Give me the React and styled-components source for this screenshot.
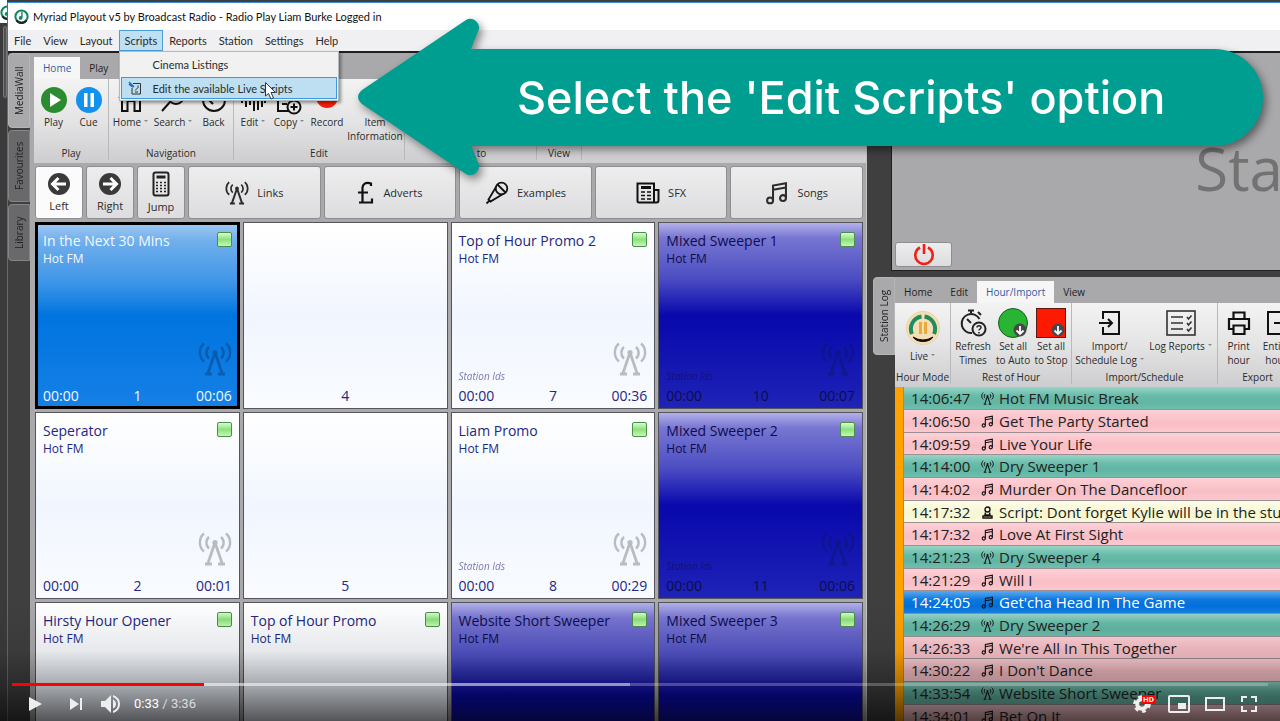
import { useState } from "react";
import styled, { createGlobalStyle, css } from "styled-components";

const GlobalStyle = createGlobalStyle`
    * {
        box-sizing: border-box;
    }
    html, body, #root {
        height: 100%;
        margin: 0;
    }
    body {
        overflow: hidden;
        font-family: "Open Sans", "Noto Sans", sans-serif;
        font-size: 11px;
        color: #2b2b2b;
        background-color: #3f3f40;
    }
    button {
        font: inherit;
        color: inherit;
        padding: 0;
        border: none;
        background: none;
        cursor: pointer;
    }
`;

const Player = styled.div`
    position: relative;
    display: flex;
    height: 100%;
    overflow: hidden;
    background-color: #3f3f40;
`;

const BackWindow = styled.div`
    flex: 0 0 7px;
    padding-top: 5px;
    overflow: hidden;
    background: linear-gradient(#fff 23px, #3b3b3c 23px);
`;

const BackTab = styled.div`
    height: 72px;
    margin: 3px 0 0 3px;
    border: 1px solid #777;
    border-radius: 3px;
    background-color: #525254;
`;

const Window = styled.div`
    flex: 1;
    min-width: 0;
    display: flex;
    flex-direction: column;
    margin-top: 2px;
    border-top: 1px solid #3f8fd8;
    border-left: 1px solid #3775ab;
`;

const TitleBar = styled.div`
    display: flex;
    align-items: center;
    gap: 4px;
    height: 27px;
    padding-left: 6px;
    font-family: Lato, sans-serif;
    color: #111;
    background-color: #fff;
`;

const MenuBar = styled.nav`
    position: relative;
    display: flex;
    height: 21px;
    font-family: Lato, sans-serif;
    background-color: #f0eff1;
`;

const MenuButton = styled.button`
    padding: 0 5px;
    border: 1px solid ${({ $open }) => ($open ? "#4a9edb" : "transparent")};
    background-color: ${({ $open }) => ($open ? "#bfdff2" : "transparent")};
`;

const MenuWrapper = styled.div`
    position: relative;
    display: flex;
`;

const Dropdown = styled.div`
    position: absolute;
    z-index: 3;
    top: 21px;
    left: 0;
    width: 220px;
    padding: 2px;
    border: 1px solid #b8b8b8;
    background-color: #f1f1f2;
    box-shadow: 2px 2px 3px rgba(0, 0, 0, 0.4);
`;

const DropdownItem = styled.button`
    display: grid;
    grid-template-columns: 26px 1fr;
    align-items: center;
    width: 100%;
    height: 20px;
    margin-bottom: ${({ $active }) => ($active ? "0" : "4px")};
    text-align: left;
    outline: ${({ $active }) => ($active ? "1px solid #3b9ade" : "none")};
    background-color: ${({ $active }) => ($active ? "#bedff1" : "transparent")};

    svg {
        justify-self: center;
    }
    span {
        grid-column: 2;
        padding-left: 5px;
        white-space: nowrap;
    }
`;

const Workspace = styled.main`
    flex: 1;
    min-height: 0;
    display: grid;
    grid-template-columns: minmax(0, 19fr) minmax(0, 9fr);
    column-gap: 6px;
    border-top: 2px solid #1f1f20;
    background-color: #3f3f40;
`;

const Pane = styled.section`
    flex: 1;
    min-width: 0;
    min-height: 0;
    display: flex;
`;

const SideTabs = styled.div`
    flex: 0 0 22px;
    display: flex;
    flex-direction: column;
    gap: 2px;
`;

const SideTab = styled.button`
    display: flex;
    align-items: center;
    justify-content: center;
    height: ${({ $h }) => $h}px;
    writing-mode: vertical-rl;
    rotate: 180deg;
    border: 1px solid ${({ $active }) => ($active ? "#b5b5b7" : "#858587")};
    border-radius: 0 4px 4px 0;
    background-color: ${({ $active }) => ($active ? "#a9a8aa" : "#69696b")};
    font-size: 10px;
    color: #222;
`;

const Panel = styled.div`
    flex: 1;
    min-width: 0;
    display: flex;
    flex-direction: column;
    padding-top: 4px;
    background-color: #a9a8aa;
    overflow: hidden;
`;

const WallPanel = styled(Panel)`
    padding-left: 4px;
    border-right: 1px solid #c4c4c6;
`;

const TabRow = styled.div`
    flex: none;
    display: flex;
    height: 22px;
    font-size: 10px;
`;

const Tab = styled.button`
    padding: 0 9px;
    color: ${({ $active }) => ($active ? "#2f5da3" : "#222")};
    background-color: ${({ $active }) => ($active ? "#f6f6f7" : "transparent")};
`;

const Ribbon = styled.div`
    flex: none;
    display: flex;
    height: 84px;
    overflow: hidden;
    font-size: 10px;
    background: linear-gradient(#f3f3f4, #e4e4e5 50%, #cdcdcf);
`;

const Group = styled.div`
    flex: none;
    display: flex;
    flex-direction: column;
    justify-content: space-between;
    width: ${({ $w }) => $w}px;
    padding-top: 4px;
    margin-bottom: 3px;
    border-right: 1px solid #b9b9bb;
`;

const Tools = styled.div`
    display: flex;
    justify-content: center;
`;

const Tool = styled.button`
    display: flex;
    flex-direction: column;
    align-items: center;
    width: ${({ $w }) => $w}px;
    line-height: 14px;
    white-space: nowrap;

    > svg {
        height: ${({ $icon }) => $icon || 32}px;
    }
`;

const Caret = styled.i`
    display: inline-block;
    margin: 0 0 4px 3px;
    border: 2px solid transparent;
    border-top-color: #888;
    border-bottom: none;
`;

const GroupName = styled.div`
    padding-left: ${({ $pad }) => $pad || 0}px;
    line-height: 14px;
    text-align: center;
    white-space: nowrap;
`;

const PageBar = styled.div`
    flex: none;
    display: flex;
    gap: 3px;
    height: 59px;
    padding: 3px 3px 3px 1px;
`;

const pageButton = css`
    display: flex;
    align-items: center;
    justify-content: center;
    border: 1px solid #8e8e90;
    border-radius: 3px;
    background: linear-gradient(#ededee, #dddddf);
`;

const NavButton = styled.button`
    ${pageButton}
    flex: 0 0 48px;
    flex-direction: column;
    line-height: 14px;
    gap: 3px;
    ${({ $active }) => $active && "background: #fbfbfc;"}
`;

const PageButton = styled.button`
    ${pageButton}
    flex: 1;
    gap: 8px;
`;

const Wall = styled.div`
    display: grid;
    grid-template-columns: repeat(4, minmax(0, 1fr));
    grid-auto-rows: 187px;
    gap: 3px;
    padding: 0 3px 0 1px;
`;

const tileLooks = {
    light: css`
        color: #23277f;
        background: linear-gradient(#fff, #f1f6fe 50%, #f9fbff);
    `,
    playing: css`
        color: #f3f9ff;
        border: 3px solid #000;
        padding: 6px 5px 0;
        background: linear-gradient(#9bc6f2, #70afec 9%, #3d95e8 32%, #0074df 50%, #1580e6);
    `,
    deep: css`
        color: #0d0d4c;
        background: linear-gradient(#b3b1ea, #7876d2 8%, #4c4dc3 30%, #0808ac 50%, #1f23b6);
    `,
};

const Tile = styled.button`
    display: flex;
    flex-direction: column;
    padding: 8px 7px 2px;
    border: 1px solid #55555f;
    text-align: left;
    ${({ $look }) => tileLooks[$look]}
`;

const TileTop = styled.div`
    display: flex;
    justify-content: space-between;
`;

const TileTitle = styled.div`
    font-size: 14px;
    line-height: 20px;
    white-space: nowrap;
`;

const TileStation = styled.div`
    font-size: 12px;
    line-height: 16px;
`;

const Ready = styled.span`
    width: 15px;
    height: 15px;
    margin-top: 1px;
    border: 1px solid #4c8f4a;
    border-radius: 2px;
    background: linear-gradient(#d8fbd0, #8be27c 50%, #c6f7b9);
`;

const TileMiddle = styled.div`
    flex: 1;
    display: flex;
    align-items: flex-end;
    justify-content: space-between;
    padding-bottom: 4px;
`;

const Category = styled.em`
    font-size: 10px;
    line-height: 14px;
    opacity: 0.6;
`;

const TileBottom = styled.div`
    display: grid;
    grid-template-columns: 1fr 1fr 1fr;
    font-size: 14px;
    line-height: 18px;
    margin-bottom: 1px;

    span:nth-child(2) {
        text-align: center;
    }
    span:nth-child(3) {
        text-align: right;
    }
`;

const Watermark = styled(Mast)`
    margin-bottom: 7px;
    opacity: ${({ $look }) => ($look === "light" ? 0.28 : 0.3)};
    color: ${({ $look }) => ($look === "light" ? "#222" : "#061a40")};
`;

const RightColumn = styled.div`
    display: flex;
    flex-direction: column;
    gap: 6px;
    min-width: 0;
    min-height: 0;
`;

const StationPanel = styled.section`
    flex: 0 0 218px;
    display: flex;
    flex-direction: column;
    justify-content: space-between;
    margin-left: 18px;
    padding: 80px 0 3px 3px;
    border: 1px solid #202021;
    border-top: none;
    border-right: none;
    background-color: #a9a8aa;
    overflow: hidden;
`;

const StationName = styled.div`
    padding-left: 78%;
    font-size: 60px;
    line-height: 70px;
    color: #727273;
`;

const PowerButton = styled.button`
    ${pageButton}
    width: 57px;
    height: 25px;
`;

const LogTable = styled.table`
    display: block;
    border-left: 8px solid #ffa200;
    padding-left: 1px;
    background-color: #8d8d90;

    tbody {
        display: block;
    }
`;

const rowLooks = {
    link: "linear-gradient(#96d5c6, #68bba9 40%, #62b5a3 70%, #6cc0ad)",
    song: "linear-gradient(#ffd0d7, #f8bec5 60%, #fdc7ce)",
    script: "linear-gradient(#fdfde8, #f6f6d2 60%, #fafadc)",
    current: "linear-gradient(#5ba9f0, #0c78df 40%, #0070db 70%, #1a80e4)",
};

const LogRow = styled.tr`
    display: grid;
    grid-template-columns: 70px 18px 1fr;
    align-items: center;
    height: 23px;
    padding-left: 7px;
    border-bottom: 1px solid #9b8f93;
    font-size: 15px;
    line-height: 22px;
    color: ${({ $look }) => ($look === "current" ? "#fff" : "#222")};
    background: ${({ $look }) => rowLooks[$look]};

    &:nth-child(3n) {
        height: 22px;
    }
    td {
        padding: 0;
        white-space: nowrap;
    }
    svg {
        display: block;
        color: #111;
    }
`;

const Callout = styled.div`
    position: absolute;
    z-index: 4;
    top: 18px;
    left: 28%;
    right: 17px;
    display: flex;
    align-items: center;
    filter: drop-shadow(3px 4px 4px rgba(0, 0, 0, 0.45));

    svg {
        flex: none;
    }
`;

const CalloutText = styled.div`
    flex: 1;
    height: 97px;
    margin-left: -12px;
    padding-right: 49px;
    border-radius: 0 49px 49px 0;
    background-color: #009e91;
    font-family: Inter, sans-serif;
    font-weight: 500;
    font-size: 45px;
    line-height: 97px;
    text-align: center;
    white-space: nowrap;
    color: #fff;
`;

const Pointer = styled.svg`
    position: absolute;
    z-index: 5;
    top: 51px;
    left: 145px;
`;

const Controls = styled.div`
    position: absolute;
    z-index: 6;
    left: 0;
    right: 0;
    bottom: 0;
    padding: 83px 12px 0;
    background: linear-gradient(
        transparent,
        rgba(0, 0, 0, 0.07) 42%,
        rgba(0, 0, 0, 0.34) 73%,
        rgba(0, 0, 0, 0.66)
    );
    color: #eee;
`;

const Seek = styled.input`
    appearance: none;
    display: block;
    width: 100%;
    height: 3px;
    margin: 0;
    background: linear-gradient(
        to right,
        #f00 ${({ value }) => value}%,
        rgba(255, 255, 255, 0.55) ${({ value }) => value}% 49.2%,
        rgba(255, 255, 255, 0.24) 49.2%
    );

    &::-webkit-slider-thumb {
        appearance: none;
        width: 0;
        height: 0;
    }
`;

const ControlRow = styled.div`
    display: flex;
    align-items: center;
    justify-content: space-between;
    height: 35px;
    padding: 0 10px 0 16px;

    > div {
        display: flex;
        align-items: center;
    }
    button {
        position: relative;
        display: flex;
    }
`;

const LeftControls = styled.div`
    gap: 18px;
`;

const RightControls = styled.div`
    gap: 15px;
`;

const Time = styled.span`
    margin-left: -5px;
    font-family: Roboto, sans-serif;
    font-size: 13px;
    color: #ddd;

    b {
        font-weight: 400;
        color: #fff;
    }
`;

const HdBadge = styled.span`
    position: absolute;
    top: 0;
    left: 9px;
    padding: 0 1px;
    font-family: Roboto, sans-serif;
    font-size: 8px;
    font-weight: 700;
    line-height: 9px;
    color: #fff;
    background-color: #f00;
`;

function Mast({ size = 34, className }) {
    return (
        <svg className={className} width={size} height={size} viewBox="0 0 34 34" fill="none" stroke="currentColor" strokeWidth="2.4">
            <path d="M6 1.5C0.5 6 0.5 15 6 19.5M11 5C7.5 8 7.5 13.500 11 16.500M28 1.500C33.500 6 33.500 15 28 19.500M23 5C26.500 8 26.500 13.500 23 16.500" />
            <circle cx="17" cy="10.500" r="2.600" fill="currentColor" stroke="none" />
            <path d="M16.500 12L10 31M17.500 12L24 31M7 32H14M20 32H27" strokeWidth="2.800" />
        </svg>
    );
}

const Notes = ({ size = 26 }) => (
    <svg width={size} height={size} viewBox="0 0 26 26" fill="none" stroke="currentColor" strokeWidth="2.200">
        <circle cx="5.500" cy="21" r="3.200" />
        <circle cx="19.500" cy="18.500" r="3.200" />
        <path d="M8.700 21V5L22.700 2.500V18.500M8.700 9.500L22.700 7" />
    </svg>
);

const Logo = ({ size = 15 }) => (
    <svg width={size} height={size} viewBox="0 0 16 16">
        <circle cx="8" cy="8" r="6.500" fill="#fff" stroke="#168561" strokeWidth="2.200" />
        <path d="M2.500 12A6.500 6.500 0 0 0 13.500 12" fill="none" stroke="#222" strokeWidth="2.200" />
        <path d="M8.500 3V9" stroke="#168561" strokeWidth="1.500" />
        <circle cx="7" cy="9.500" r="2" fill="#168561" />
    </svg>
);

const Quill = () => (
    <svg width="14" height="14" viewBox="0 0 14 14" fill="none" stroke="#333">
        <path d="M5 2.500H12.500V13H4V7M7 9.500L10.500 6M7 11H10M10 4.500V6" />
        <path d="M1 1L6 6M1 3L5 6" stroke="#2470b0" strokeWidth="1.600" />
    </svg>
);

const PlayDisc = () => (
    <svg width="26" viewBox="0 0 26 32">
        <circle cx="13" cy="17" r="13" fill="#2b8c2f" />
        <path d="M9 10L20 17L9 24Z" fill="#fff" />
    </svg>
);

const CueDisc = () => (
    <svg width="26" viewBox="0 0 26 32">
        <circle cx="13" cy="17" r="13" fill="#1292ee" />
        <path d="M8 10H11.500V24H8ZM14.500 10H18V24H14.500Z" fill="#fff" />
    </svg>
);

const HouseIcon = () => (
    <svg width="26" viewBox="0 0 26 32" fill="none" stroke="#111" strokeWidth="2">
        <path d="M1 15L13 5L25 15M4 13V28H9.500V18H16.500V28H22V13" />
    </svg>
);

const SearchIcon = () => (
    <svg width="26" viewBox="0 0 26 32" fill="none" stroke="#111" strokeWidth="2">
        <circle cx="16" cy="13" r="8" />
        <path d="M10 19L2 28" />
    </svg>
);

const BackIcon = () => (
    <svg width="26" viewBox="0 0 26 32" fill="none" stroke="#111" strokeWidth="2">
        <circle cx="13" cy="17" r="11" />
        <path d="M18 17H8M12 13L8 17L12 21" />
    </svg>
);

const WaveIcon = () => (
    <svg width="26" viewBox="0 0 26 32" stroke="#111" strokeWidth="2">
        <path d="M2 14V20M6 11V24M10 7V22M14 10V28M18 6V27M22 12V24M25 14V20" />
    </svg>
);

const CopyIcon = () => (
    <svg width="26" viewBox="0 0 26 32" fill="none" stroke="#111" strokeWidth="2">
        <path d="M7 7H2V28H13M14 12V7H20V13M6 17H12M6 21H11" />
        <circle cx="18" cy="24" r="6.500" />
        <path d="M18 20.500V27.500M14.500 24H21.500" />
    </svg>
);

const RecordIcon = () => (
    <svg width="26" viewBox="0 0 26 32">
        <circle cx="13" cy="14" r="11" fill="#fb1b0a" />
    </svg>
);

const InfoIcon = () => (
    <svg width="26" viewBox="0 0 26 32" fill="none" stroke="#111" strokeWidth="2">
        <circle cx="13" cy="16" r="10" />
        <path d="M13 14V22M13 9V11" />
    </svg>
);

const CircleArrow = ({ flip }) => (
    <svg width="24" height="24" viewBox="0 0 24 24">
        <circle cx="12" cy="12" r="11" fill="#3a3a3b" />
        <path d={flip ? "M5 12H18M12.500 6L18.500 12L12.500 18" : "M19 12H6M11.500 6L5.500 12L11.500 18"} fill="none" stroke="#fff" strokeWidth="3" />
    </svg>
);

const KeypadIcon = () => (
    <svg width="18" height="26" viewBox="0 0 18 26" fill="none" stroke="#222">
        <rect x="1.500" y="1.500" width="15" height="23" rx="2" strokeWidth="2" />
        <path d="M4.500 6H13.500" strokeWidth="3" />
        <path d="M4 11.500H14M4 14.500H14M4 17.500H14M4 20.500H14" strokeWidth="1.600" strokeDasharray="2 2" />
    </svg>
);

const PoundIcon = () => (
    <svg width="18" height="24" viewBox="0 0 18 24" fill="none" stroke="#111" strokeWidth="2.200">
        <path d="M14 5V2.500C9 0.500 5 3 5.500 8V21.500M1 11.500H11M2 21.500H15V17.500" />
    </svg>
);

const MicIcon = () => (
    <svg width="24" height="24" viewBox="0 0 24 24" fill="none" stroke="#111" strokeWidth="1.800">
        <circle cx="16.500" cy="7.500" r="5.800" />
        <path d="M11 6L3.500 18.500L5.500 20.500L18 13M12.500 3.500L20.500 11.500M4.500 19.500L1.500 22.500" />
    </svg>
);

const NewsIcon = () => (
    <svg width="24" height="22" viewBox="0 0 24 22" fill="none" stroke="#111" strokeWidth="2">
        <path d="M1.500 1.500H18V20.500H3Q1.500 20.500 1.500 19ZM18 8H22.500V18.500Q22.500 20.500 20.500 20.500H17" />
        <path d="M5 5.500H15" strokeWidth="3" />
        <path d="M5 10H9M11 10H15M5 13.500H9M11 13.500H15M5 17H9M11 17H15" strokeWidth="1.600" />
    </svg>
);

const PowerIcon = () => (
    <svg width="22" height="22" viewBox="0 0 22 22" fill="none" stroke="#ee2216" strokeWidth="2.600">
        <path d="M7 3.500A8.700 8.700 0 1 0 15 3.500M11 0V10" />
    </svg>
);

const LiveIcon = () => (
    <svg width="36" viewBox="0 0 36 40" fill="none">
        <circle cx="18" cy="20" r="16.500" fill="#f5ddb4" stroke="#edd3a6" />
        <path d="M7 26A12.500 12.500 0 0 1 16.500 8.500M19.500 8.500A12.500 12.500 0 0 1 29 26" stroke="#1d8d5f" strokeWidth="4" />
        <path d="M8 29Q18 35 28 29Q25 33.500 18 33.500Q11 33.500 8 29Z" fill="#111" stroke="#111" />
        <path d="M15.500 14V26M20.500 14V26" stroke="#e9a93c" strokeWidth="3" />
    </svg>
);

const StopwatchIcon = () => (
    <svg width="28" viewBox="0 0 28 32" fill="none" stroke="#222" strokeWidth="2">
        <path d="M20.500 12A9.500 9.500 0 1 0 13 26M9 3.500H15M12 3.500V6M19 5L22 8M12 16L8 12" />
        <circle cx="20" cy="22" r="6.500" />
        <path d="M18 20.500C18 18 22 18 22 20.500C22 22 20 22 20 23.500M20 25V26.500" strokeWidth="1.500" />
    </svg>
);

const SetAll = ({ square }) => (
    <svg width="30" viewBox="0 0 30 32">
        {square ? (
            <rect x="0.500" y="1.500" width="29" height="29" fill="#fe1a00" stroke="#5a1a10" />
        ) : (
            <circle cx="15" cy="16" r="14.500" fill="#27b533" stroke="#1a5a20" />
        )}
        <circle cx="22" cy="23" r="6.500" fill="#48484a" />
        <path d="M22 19V27M18.500 23.500L22 27L25.500 23.500" fill="none" stroke="#fff" strokeWidth="1.800" />
    </svg>
);

const BoxArrow = ({ out }) => (
    <svg width="22" viewBox="0 0 22 32" fill="none" stroke="#111" strokeWidth="2">
        <path d={out ? "M18 12V5H2V27H18V20M8 16H21M17 12L21 16L17 20" : "M4 12V5H20V27H4V20M0 16H12M9 12L13 16L9 20"} />
    </svg>
);

const ReportIcon = () => (
    <svg width="30" viewBox="0 0 30 32" fill="none" stroke="#333" strokeWidth="1.600">
        <rect x="1" y="4" width="28" height="24" />
        <path d="M5 10H17M5 16H17M5 22H17M21 10L22.500 12L25.500 8.500M21 16L22.500 18L25.500 14.500M21 22L22.500 24L25.500 20.500" />
    </svg>
);

const PrinterIcon = () => (
    <svg width="24" viewBox="0 0 24 32" fill="none" stroke="#111" strokeWidth="2.200">
        <path d="M6.500 12V5.500H17.500V12M6 22H2V12H22V22H18M6.500 18.500H17.500V27H6.500Z" />
    </svg>
);

const PresenterIcon = () => (
    <svg width="13" height="13" viewBox="0 0 13 13" fill="none" stroke="currentColor" strokeWidth="1.400">
        <circle cx="6.500" cy="3.500" r="2.500" />
        <path d="M4.500 6.500L4 9H9L8.500 6.500M2 12V10H11V12Z" />
    </svg>
);

const tiles = [
    { title: "In the Next 30 Mins", number: 1, length: "00:06", look: "playing" },
    { number: 4 },
    { title: "Top of Hour Promo 2", number: 7, length: "00:36", category: "Station Ids" },
    { title: "Mixed Sweeper 1", number: 10, length: "00:07", category: "Station Ids", look: "deep" },
    { title: "Seperator", number: 2, length: "00:01" },
    { number: 5 },
    { title: "Liam Promo", number: 8, length: "00:29", category: "Station Ids" },
    { title: "Mixed Sweeper 2", number: 11, length: "00:06", category: "Station Ids", look: "deep" },
    { title: "Hirsty Hour Opener" },
    { title: "Top of Hour Promo" },
    { title: "Website Short Sweeper", look: "deep" },
    { title: "Mixed Sweeper 3", look: "deep" },
];

const log = [
    ["14:06:47", "Hot FM Music Break", "link"],
    ["14:06:50", "Get The Party Started", "song"],
    ["14:09:59", "Live Your Life", "song"],
    ["14:14:00", "Dry Sweeper 1", "link"],
    ["14:14:02", "Murder On The Dancefloor", "song"],
    ["14:17:32", "Script: Dont forget Kylie will be in the studio", "script"],
    ["14:17:32", "Love At First Sight", "song"],
    ["14:21:23", "Dry Sweeper 4", "link"],
    ["14:21:29", "Will I", "song"],
    ["14:24:05", "Get'cha Head In The Game", "current"],
    ["14:26:29", "Dry Sweeper 2", "link"],
    ["14:26:33", "We're All In This Together", "song"],
    ["14:30:22", "I Don't Dance", "song"],
    ["14:33:54", "Website Short Sweeper", "link"],
    ["14:34:01", "Bet On It", "song"],
];

const rowIcons = {
    link: <Mast size={13} />,
    song: <Notes size={13} />,
    current: <Notes size={13} />,
    script: <PresenterIcon />,
};

const MediaTile = ({ title, number, length, category, look = "light" }) => (
    <Tile $look={look}>
        {title && (
            <TileTop>
                <div>
                    <TileTitle>{title}</TileTitle>
                    <TileStation>Hot FM</TileStation>
                </div>
                <Ready />
            </TileTop>
        )}
        <TileMiddle>
            <Category>{category}</Category>
            {length && <Watermark $look={look} />}
        </TileMiddle>
        <TileBottom>
            <span>{length && "00:00"}</span>
            <span>{number}</span>
            <span>{length}</span>
        </TileBottom>
    </Tile>
);

const Menu = () => {
    const [open, setOpen] = useState("Scripts");

    return (
        <MenuBar>
            {["File", "View", "Layout", "Scripts", "Reports", "Station", "Settings", "Help"].map(name => (
                <MenuWrapper key={name}>
                    <MenuButton $open={open === name} onClick={() => setOpen(open === name ? null : name)}>
                        {name}
                    </MenuButton>
                    {name === "Scripts" && open === name && (
                        <>
                            <Dropdown>
                                <DropdownItem>
                                    <span>Cinema Listings</span>
                                </DropdownItem>
                                <DropdownItem $active>
                                    <Quill />
                                    <span>Edit the available Live Scripts</span>
                                </DropdownItem>
                            </Dropdown>
                            <Pointer width="13" height="20" viewBox="0 0 13 20">
                                <path d="M1.500 1.500V15L4.500 12.500L7 18L9.500 17L7 11.500H11.500Z" fill="#fff" stroke="#333" />
                            </Pointer>
                        </>
                    )}
                </MenuWrapper>
            ))}
        </MenuBar>
    );
};

const MediaWall = () => (
    <Pane>
        <SideTabs>
            <SideTab $h={75} $active>MediaWall</SideTab>
            <SideTab $h={72}>Favourites</SideTab>
            <SideTab $h={57}>Library</SideTab>
        </SideTabs>
        <WallPanel>
            <TabRow>
                <Tab $active>Home</Tab>
                <Tab>Play</Tab>
            </TabRow>
            <Ribbon>
                <Group $w={75}>
                    <Tools>
                        <Tool $w={35}><PlayDisc />Play</Tool>
                        <Tool $w={35}><CueDisc />Cue</Tool>
                    </Tools>
                    <GroupName>Play</GroupName>
                </Group>
                <Group $w={125}>
                    <Tools>
                        <Tool $w={42}><HouseIcon /><span>Home<Caret /></span></Tool>
                        <Tool $w={43}><SearchIcon /><span>Search<Caret /></span></Tool>
                        <Tool $w={38}><BackIcon />Back</Tool>
                    </Tools>
                    <GroupName>Navigation</GroupName>
                </Group>
                <Group $w={171}>
                    <Tools>
                        <Tool $w={36}><WaveIcon /><span>Edit<Caret /></span></Tool>
                        <Tool $w={36}><CopyIcon /><span>Copy<Caret /></span></Tool>
                        <Tool $w={40}><RecordIcon />Record</Tool>
                        <Tool $w={56}><InfoIcon />Item<br />Information</Tool>
                    </Tools>
                    <GroupName>Edit</GroupName>
                </Group>
                <Group $w={132}>
                    <Tools />
                    <GroupName $pad={22}>to</GroupName>
                </Group>
                <Group $w={45}>
                    <Tools />
                    <GroupName>View</GroupName>
                </Group>
            </Ribbon>
            <PageBar>
                <NavButton $active><CircleArrow />Left</NavButton>
                <NavButton><CircleArrow flip />Right</NavButton>
                <NavButton><KeypadIcon />Jump</NavButton>
                <PageButton><Mast size={24} />Links</PageButton>
                <PageButton><PoundIcon />Adverts</PageButton>
                <PageButton><MicIcon />Examples</PageButton>
                <PageButton><NewsIcon />SFX</PageButton>
                <PageButton><Notes size={24} />Songs</PageButton>
            </PageBar>
            <Wall>
                {tiles.map((tile, i) => (
                    <MediaTile key={i} {...tile} />
                ))}
            </Wall>
        </WallPanel>
    </Pane>
);

const StationLog = () => (
    <Pane>
        <SideTabs>
            <SideTab $h={78} $active>Station Log</SideTab>
        </SideTabs>
        <Panel>
            <TabRow>
                <Tab>Home</Tab>
                <Tab>Edit</Tab>
                <Tab $active>Hour/Import</Tab>
                <Tab>View</Tab>
            </TabRow>
            <Ribbon>
                <Group $w={56}>
                    <Tools>
                        <Tool $w={48} $icon={42}><LiveIcon /><span>Live<Caret /></span></Tool>
                    </Tools>
                    <GroupName>Hour Mode</GroupName>
                </Group>
                <Group $w={121}>
                    <Tools>
                        <Tool $w={42}><StopwatchIcon />Refresh<br />Times</Tool>
                        <Tool $w={38}><SetAll />Set all<br />to Auto</Tool>
                        <Tool $w={38}><SetAll square />Set all<br />to Stop</Tool>
                    </Tools>
                    <GroupName>Rest of Hour</GroupName>
                </Group>
                <Group $w={146}>
                    <Tools>
                        <Tool $w={72}><BoxArrow />Import/<br /><span>Schedule Log<Caret /></span></Tool>
                        <Tool $w={70}><ReportIcon /><span>Log Reports<Caret /></span></Tool>
                    </Tools>
                    <GroupName>Import/Schedule</GroupName>
                </Group>
                <Group $w={80}>
                    <Tools>
                        <Tool $w={38}><PrinterIcon />Print<br />hour</Tool>
                        <Tool $w={38}><BoxArrow out />Entire<br />hour</Tool>
                    </Tools>
                    <GroupName>Export</GroupName>
                </Group>
            </Ribbon>
            <LogTable>
                <tbody>
                    {log.map(([time, title, look], i) => (
                        <LogRow key={i} $look={look}>
                            <td>{time}</td>
                            <td>{rowIcons[look]}</td>
                            <td>{title}</td>
                        </LogRow>
                    ))}
                </tbody>
            </LogTable>
        </Panel>
    </Pane>
);

const PlayerControls = () => {
    const [position, setPosition] = useState(15.3);

    return (
        <Controls>
            <Seek
                type="range"
                aria-label="Seek"
                min="0"
                max="100"
                step="0.1"
                value={position}
                onChange={e => setPosition(e.target.value)}
            />
            <ControlRow>
                <LeftControls>
                    <button aria-label="Play">
                        <svg width="16" height="16" viewBox="0 0 16 16" fill="#eee"><path d="M1 1L14 8L1 15Z" /></svg>
                    </button>
                    <button aria-label="Next">
                        <svg width="21" height="16" viewBox="-8 0 21 16" fill="#eee"><path d="M0 2L9 8L0 14ZM10 2H12V14H10Z" /></svg>
                    </button>
                    <button aria-label="Mute">
                        <svg width="20" height="20" viewBox="0 0 20 20" fill="#eee">
                            <path d="M0 7H4L10 1V19L4 13H0ZM12 5.500Q15 7 15 10T12 14.500ZM12 1Q19 3.500 19 10T12 19V17Q17 15 17 10T12 3Z" />
                        </svg>
                    </button>
                    <Time><b>0:33</b> / 3:36</Time>
                </LeftControls>
                <RightControls>
                    <button aria-label="Settings">
                        <svg width="20" height="18" viewBox="0 0 20 18">
                            <circle cx="9" cy="9" r="4.800" fill="none" stroke="#eee" strokeWidth="4" />
                            <circle cx="9" cy="9" r="7.500" fill="none" stroke="#eee" strokeWidth="2.600" strokeDasharray="3.900 3.900" />
                        </svg>
                        <HdBadge>HD</HdBadge>
                    </button>
                    <button aria-label="Miniplayer">
                        <svg width="22" height="18" viewBox="0 0 22 18">
                            <rect x="1" y="1" width="20" height="16" rx="1" fill="none" stroke="#eee" strokeWidth="2" />
                            <path d="M10 8H18V14H10Z" fill="#eee" />
                        </svg>
                    </button>
                    <button aria-label="Theater mode">
                        <svg width="20" height="14" viewBox="0 0 20 14">
                            <rect x="1" y="1" width="18" height="12" fill="none" stroke="#eee" strokeWidth="2" />
                        </svg>
                    </button>
                    <button aria-label="Full screen">
                        <svg width="18" height="16" viewBox="0 0 18 16" fill="none" stroke="#eee" strokeWidth="2">
                            <path d="M2 6V1H7M11 1H16V6M16 10V15H11M7 15H2V10" />
                        </svg>
                    </button>
                </RightControls>
            </ControlRow>
        </Controls>
    );
};

const App = () => (
    <>
        <GlobalStyle />
        <Player>
            <BackWindow>
                <Logo size={15} />
                <BackTab />
            </BackWindow>
            <Window>
                <TitleBar>
                    <Logo />
                    Myriad Playout v5 by Broadcast Radio - Radio Play Liam Burke Logged in
                </TitleBar>
                <Menu />
                <Workspace>
                    <MediaWall />
                    <RightColumn>
                        <StationPanel>
                            <StationName>Station</StationName>
                            <PowerButton aria-label="Power"><PowerIcon /></PowerButton>
                        </StationPanel>
                        <StationLog />
                    </RightColumn>
                </Workspace>
            </Window>
            <Callout>
                <svg width="122" height="158" viewBox="0 0 122 158">
                    <path
                        d="M4 72L108 2Q113 -1 118 3Q122 7 121 11L113 31V127L121 147Q122 151 118 155Q113 159 108 156L4 86Q-4 79 4 72Z"
                        fill="#009e91"
                    />
                </svg>
                <CalloutText>Select the 'Edit Scripts' option</CalloutText>
            </Callout>
            <PlayerControls />
        </Player>
    </>
);

export default App;
